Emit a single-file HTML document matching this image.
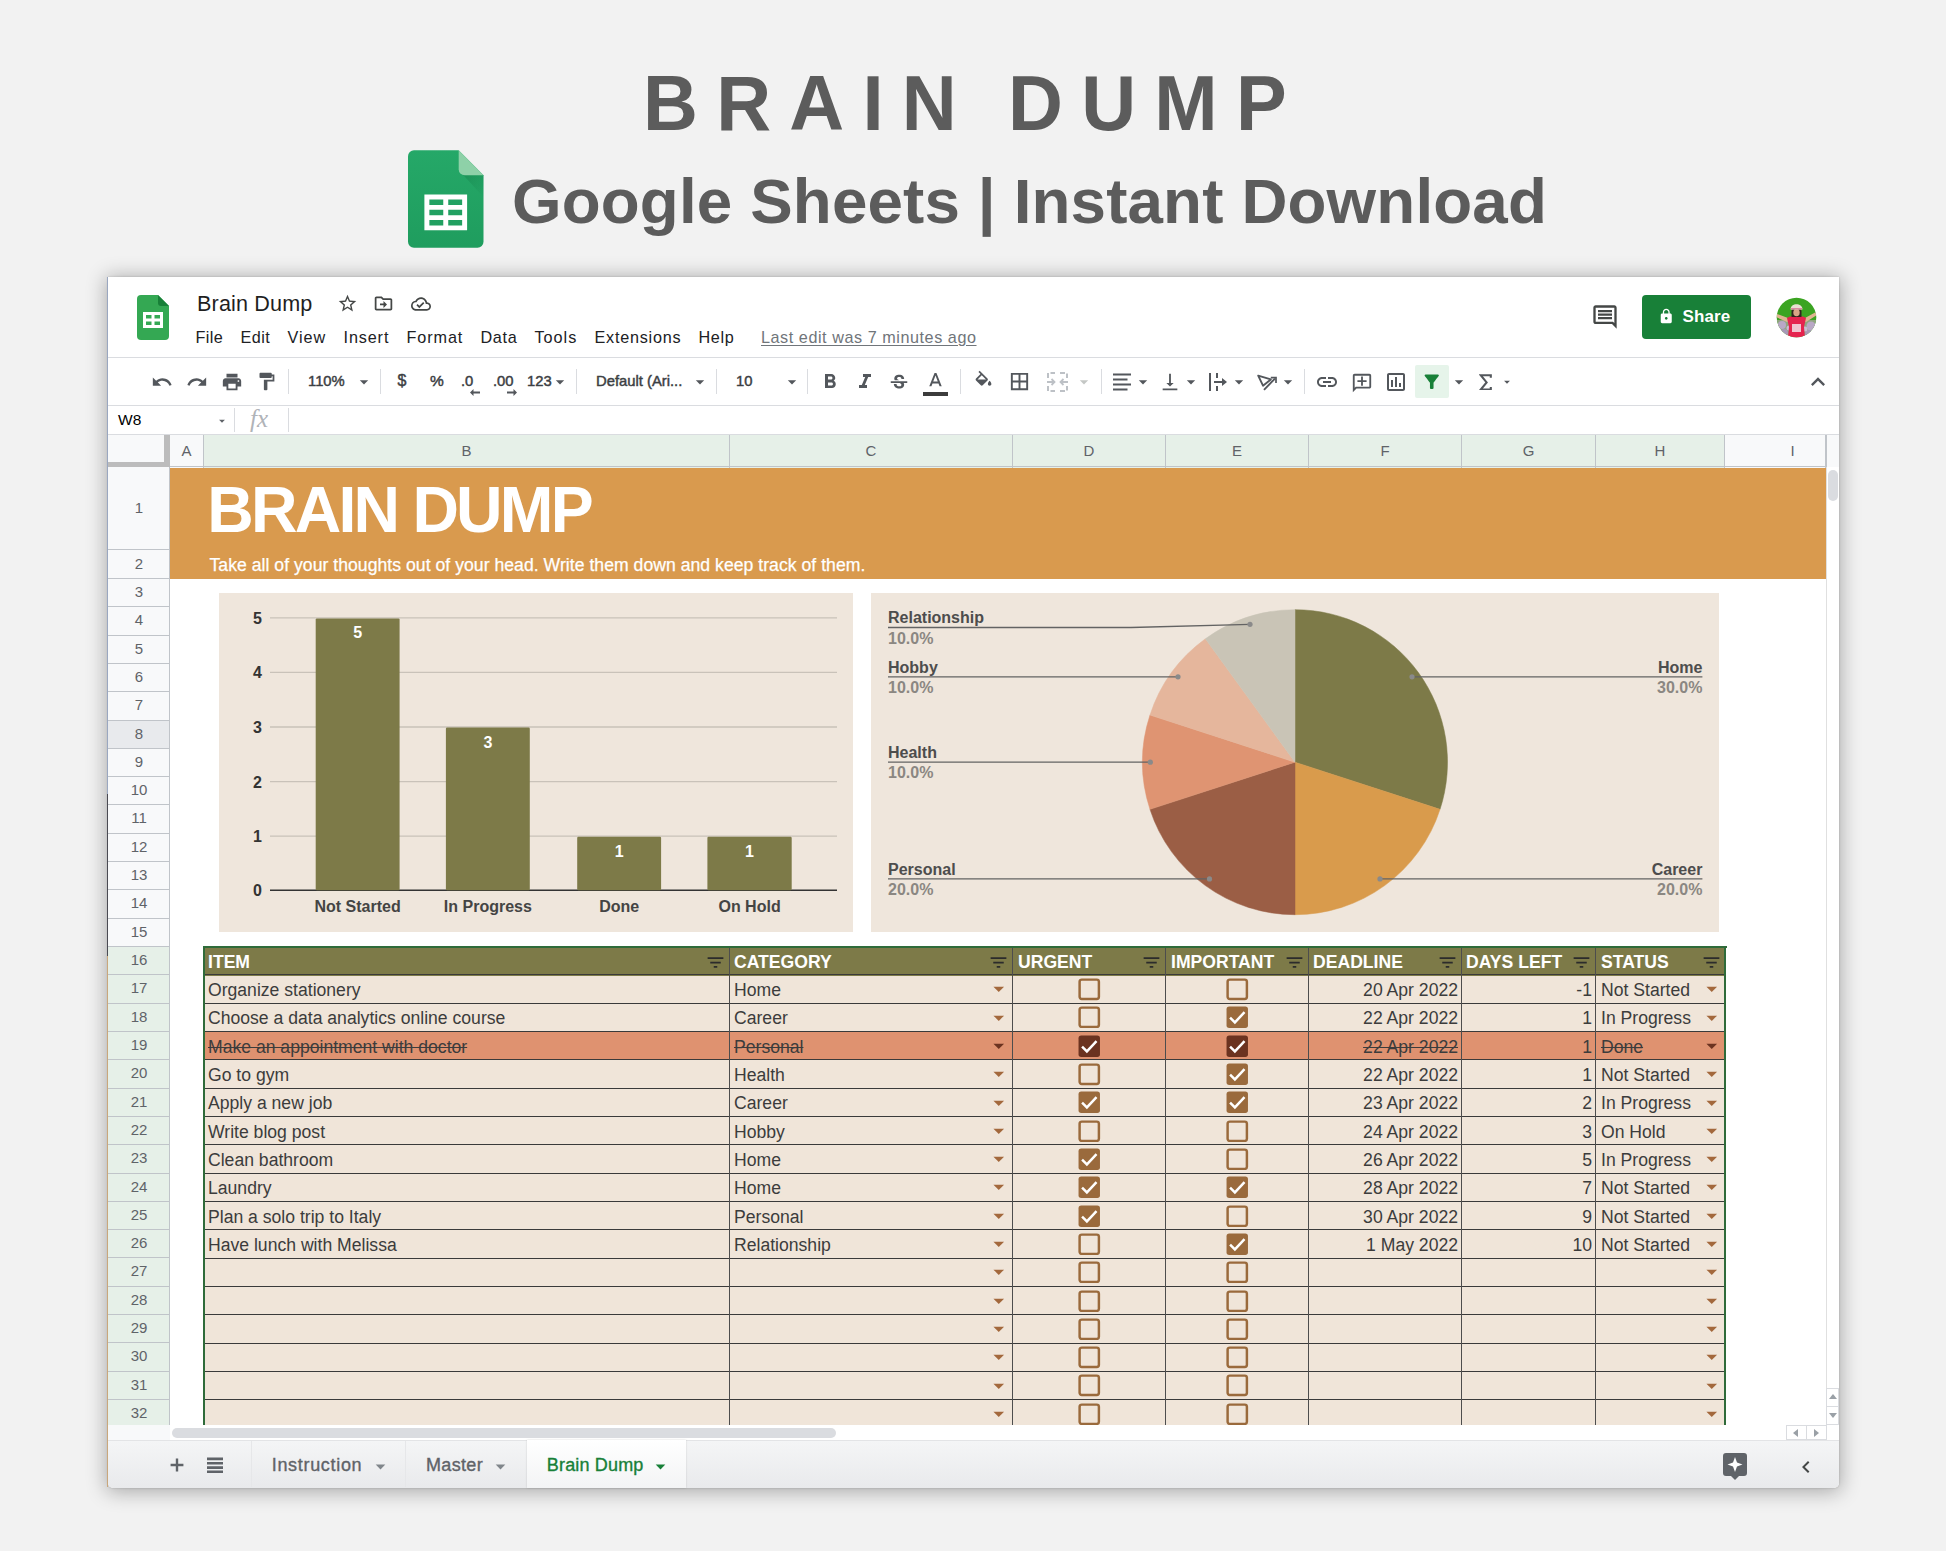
<!DOCTYPE html><html><head><meta charset="utf-8"><title>Brain Dump</title><style>
*{box-sizing:border-box;margin:0;padding:0}
html,body{width:1946px;height:1551px;overflow:hidden}
body{background:#f2f2f2;font-family:"Liberation Sans",sans-serif;position:relative;color:#202124}
.a{position:absolute;white-space:pre}
.win{position:absolute;left:108px;top:277px;width:1731px;height:1211px;background:#fff;box-shadow:0 0 2px rgba(0,0,0,.22),0 2px 20px 2px rgba(0,0,0,.30);overflow:hidden;border-radius:0 0 5px 5px}
.t1{left:647.5px;top:58px;font-weight:bold;font-size:78px;letter-spacing:18.7px;word-spacing:-6.5px;color:#5c5c5c;line-height:90px;transform:scaleX(.975);transform-origin:0 0;margin-left:-5px}
.t2{left:512px;top:164px;font-weight:bold;font-size:63.7px;color:#5c5c5c;line-height:74px;letter-spacing:.16px}
.menu{top:327px;font-size:16.2px;line-height:20px;color:#202124}
.tb{top:372px;font-size:14.8px;line-height:18px;color:#3c4043;-webkit-text-stroke:.45px #3c4043}
.sep{position:absolute;width:1px;background:#dadce0}
.ic{position:absolute;fill:#5f6368}
.rh{position:absolute;left:108px;width:62px;text-align:center;font-size:15px;color:#5f6368;border-bottom:1px solid #c0c4c9;background:#f8f9fa}
.ch{position:absolute;top:435px;height:33px;line-height:31px;text-align:center;font-size:15px;color:#5f6368;border-right:1px solid #c0c4c9;background:#e6f0e8}
.cell{position:absolute;font-size:17.6px;line-height:28px;color:#3c3c3c;white-space:pre}
.hd{position:absolute;font-size:17.6px;line-height:28px;color:#fff;font-weight:bold;white-space:pre}
.st{text-decoration:line-through}
.cl{position:absolute;font-weight:bold;font-size:16px;line-height:20px;white-space:pre}
</style></head><body>
<div class="a t1">BRAIN DUMP</div>
<div class="a t2">Google Sheets | Instant Download</div>
<svg class="a" style="left:408px;top:150.3px" width="75.5" height="98" viewBox="0 0 76 98">
<defs><linearGradient id="lg" x1="0" y1="0" x2="0" y2="1"><stop offset="0" stop-color="#25a868"/><stop offset="1" stop-color="#1f9d5e"/></linearGradient>
<linearGradient id="fs" x1="0" y1="0" x2="1" y2="1"><stop offset="0" stop-color="#0d6b3a" stop-opacity=".35"/><stop offset="1" stop-color="#0d6b3a" stop-opacity="0"/></linearGradient></defs>
<path d="M6 0h45l25 25v67a6 6 0 0 1-6 6H6a6 6 0 0 1-6-6V6a6 6 0 0 1 6-6z" fill="url(#lg)"/>
<path d="M53 22l23 3v22z" fill="url(#fs)"/>
<path d="M51 0l25 25H57a6 6 0 0 1-6-6z" fill="#8ed1a8"/>
<path d="M16.500 44.500v36h43v-36zm5 5h14v5.500h-14zm19 0h14v5.500h-14zm-19 10.300h14v5.500h-14zm19 0h14v5.500h-14zm-19 10.300h14v5.500h-14zm19 0h14v5.500h-14z" fill="#fff"/>
</svg>
<div class="win"></div>
<div class="a" style="left:107px;top:277px;width:1.200px;height:1210px;background:linear-gradient(#9aa7c0 0,#9aa7c0 42.700%,#4a4a52 42.700%,#4a4a52 56.100%,#c9a77c 56.100%)"></div>
<svg class="a" style="left:137px;top:295px" width="32" height="45" viewBox="0 0 32 45">
<path d="M4 0h17l11 11v30a4 4 0 0 1-4 4H4a4 4 0 0 1-4-4V4a4 4 0 0 1 4-4z" fill="#34a853"/>
<path d="M21 0l11 11H24a3 3 0 0 1-3-3z" fill="#188038"/>
<path d="M6 17v16h20V17zm3 3h5.5v3.5H9zm8.5 0H23v3.5h-5.500zM9 26.500h5.500V30H9zm8.500 0H23V30h-5.500z" fill="#fff"/>
</svg>
<div class="a" style="left:197px;top:291px;font-size:21.6px;line-height:26px;color:#1f1f1f;letter-spacing:0.15px">Brain Dump</div>
<svg class="a" style="left:336.5px;top:293.0px" width="21" height="21" viewBox="0 0 24 24" fill="#444746"><path d="M22 9.24l-7.19-.62L12 2 9.19 8.63 2 9.24l5.46 4.73L5.82 21 12 17.27 18.18 21l-1.630-7.030L22 9.240zM12 15.400l-3.760 2.270 1-4.280-3.320-2.880 4.380-.380L12 6.100l1.710 4.040 4.380.380-3.320 2.880 1 4.280L12 15.400z"/></svg>
<svg class="a" style="left:372.5px;top:293.0px" width="21" height="21" viewBox="0 0 24 24" fill="#444746"><path d="M20 6h-8l-2-2H4c-1.100 0-2 .900-2 2v12c0 1.100.900 2 2 2h16c1.100 0 2-.900 2-2V8c0-1.100-.900-2-2-2zm0 12H4V6h5.170l2 2H20v10zm-8-1l4-4-4-4v3H8v2h4v3z"/></svg>
<svg class="a" style="left:411.0px;top:294.0px" width="20" height="20" viewBox="0 0 24 24" fill="#444746"><path d="M19.35 10.04C18.67 6.59 15.64 4 12 4 9.11 4 6.6 5.64 5.35 8.04 2.34 8.36 0 10.91 0 14c0 3.31 2.69 6 6 6h13c2.760 0 5-2.240 5-5 0-2.640-2.050-4.780-4.650-4.960zM19 18H6c-2.210 0-4-1.790-4-4 0-2.050 1.530-3.760 3.560-3.970l1.070-.11.5-.95C8.080 7.140 9.940 6 12 6c2.620 0 4.880 1.860 5.390 4.430l.3 1.500 1.530.11c1.560.1 2.780 1.410 2.780 2.960 0 1.650-1.350 3-3 3zm-9-3.820l-2.090-2.090L6.500 13.500 10 17l6.010-6.010-1.410-1.410z"/></svg>
<div class="a menu" style="left:195.5px;letter-spacing:0.43px">File</div>
<div class="a menu" style="left:240.5px;letter-spacing:0.47px">Edit</div>
<div class="a menu" style="left:287.5px;letter-spacing:1.00px">View</div>
<div class="a menu" style="left:343.5px;letter-spacing:0.88px">Insert</div>
<div class="a menu" style="left:406.5px;letter-spacing:0.92px">Format</div>
<div class="a menu" style="left:480.5px;letter-spacing:0.65px">Data</div>
<div class="a menu" style="left:534.5px;letter-spacing:1.00px">Tools</div>
<div class="a menu" style="left:594.5px;letter-spacing:0.76px">Extensions</div>
<div class="a menu" style="left:698.5px;letter-spacing:0.63px">Help</div>
<div class="a menu" style="left:761px;color:#70757a;text-decoration:underline;text-underline-offset:2px;letter-spacing:0.55px">Last edit was 7 minutes ago</div>
<svg class="a" style="left:1590.5px;top:303.0px" width="28" height="28" viewBox="0 0 24 24" fill="#444746"><path d="M21.99 4c0-1.100-.89-2-1.990-2H4c-1.100 0-2 .900-2 2v12c0 1.100.900 2 2 2h14l4 4-.01-18zM20 4v13.170L18.830 16H4V4h16zM6 12h12v2H6zm0-3h12v2H6zm0-3h12v2H6z"/></svg>
<div class="a" style="left:1642px;top:295px;width:109px;height:44px;background:#188038;border-radius:4px"></div>
<svg class="a" style="left:1657.8px;top:307.8px" width="16.5" height="16.5" viewBox="0 0 24 24" fill="#fff"><path d="M18 8h-1V6c0-2.760-2.240-5-5-5S7 3.240 7 6v2H6c-1.100 0-2 .900-2 2v10c0 1.100.900 2 2 2h12c1.100 0 2-.900 2-2V10c0-1.100-.900-2-2-2zm-6 9c-1.100 0-2-.900-2-2s.900-2 2-2 2 .900 2 2-.900 2-2 2zm3.100-9H8.900V6c0-1.710 1.390-3.100 3.100-3.100 1.710 0 3.100 1.390 3.100 3.100v2z"/></svg>
<div class="a" style="left:1682.500px;top:306.300px;font-size:17px;line-height:22px;color:#fff;font-weight:bold;letter-spacing:.1px">Share</div>
<svg class="a" style="left:1775.500px;top:296.500px" width="41" height="41" viewBox="0 0 41 41"><defs><clipPath id="av"><circle cx="20.500" cy="20.500" r="19.800"/></clipPath></defs>
<g clip-path="url(#av)"><rect width="41" height="41" fill="#3ba422"/><rect y="23" width="41" height="18" fill="#8fa57f"/>
<circle cx="6" cy="28" r="4" fill="#b9a8c6"/><circle cx="35" cy="29" r="4.500" fill="#b9a8c6"/><circle cx="8" cy="36" r="4" fill="#a898b8"/><circle cx="33" cy="37" r="4" fill="#a898b8"/><circle cx="13" cy="31" r="2.500" fill="#c9bcd2"/><circle cx="29" cy="32" r="2.500" fill="#c9bcd2"/>
<path d="M1 17l11 4 2 3-3 1-11-5zM40 15l-11 6-2 3 3 1 11-7z" fill="#dfb391"/>
<path d="M11 21c3-2 6-2 9.500-2s6.500 0 9.500 2l-2 9 1 11H12l1-11z" fill="#e5234e"/>
<path d="M16 27h9v8h-9z" fill="#f0c4d0"/>
<path d="M15.500 14c0-4 10-4 10 0v6h-10z" fill="#33241e"/><ellipse cx="20.500" cy="15.500" rx="3.200" ry="3.800" fill="#d8a585"/>
<path d="M14.500 12.500c0-7 12-7 12 0z" fill="#e9dfd2"/><path d="M15 11h11v1.500H15z" fill="#d98aa0"/></g></svg>
<div class="a" style="left:108px;top:357px;width:1731px;height:1px;background:#dadce0"></div>
<div class="a" style="left:108px;top:405px;width:1731px;height:1px;background:#dadce0"></div>
<div class="a" style="left:108px;top:434px;width:1731px;height:1px;background:#dadce0"></div>
<svg class="a" style="left:151.0px;top:370.5px" width="22" height="22" viewBox="0 0 24 24" fill="#53575c"><path d="M12.5 8c-2.65 0-5.05.99-6.9 2.6L2 7v9h9l-3.62-3.62c1.39-1.16 3.16-1.88 5.12-1.88 3.54 0 6.55 2.31 7.6 5.5l2.37-.78C21.08 11.03 17.15 8 12.5 8z"/></svg>
<svg class="a" style="left:186.0px;top:370.5px" width="22" height="22" viewBox="0 0 24 24" fill="#53575c"><path d="M18.4 10.6C16.55 8.99 14.15 8 11.5 8c-4.65 0-8.58 3.03-9.96 7.22L3.9 16c1.05-3.19 4.05-5.5 7.6-5.5 1.95 0 3.73.72 5.12 1.88L13 16h9V7l-3.6 3.6z"/></svg>
<svg class="a" style="left:220.5px;top:370.5px" width="22" height="22" viewBox="0 0 24 24" fill="#53575c"><path d="M19 8H5c-1.66 0-3 1.34-3 3v6h4v4h12v-4h4v-6c0-1.66-1.34-3-3-3zm-3 11H8v-5h8v5zm3-7c-.55 0-1-.45-1-1s.45-1 1-1 1 .45 1 1-.45 1-1 1zm-1-9H6v4h12V3z"/></svg>
<svg class="a" style="left:256.0px;top:371.0px" width="21" height="21" viewBox="0 0 24 24" fill="#53575c"><path d="M18 4V3c0-.55-.45-1-1-1H5c-.55 0-1 .45-1 1v4c0 .55.45 1 1 1h12c.55 0 1-.45 1-1V6h1v4H9v11c0 .55.45 1 1 1h2c.55 0 1-.45 1-1v-9h8V4h-3z"/></svg>
<div class="sep" style="left:288px;top:369px;height:25px"></div>
<div class="sep" style="left:380px;top:369px;height:25px"></div>
<div class="sep" style="left:576px;top:369px;height:25px"></div>
<div class="sep" style="left:716px;top:369px;height:25px"></div>
<div class="sep" style="left:807px;top:369px;height:25px"></div>
<div class="sep" style="left:960px;top:369px;height:25px"></div>
<div class="sep" style="left:1101px;top:369px;height:25px"></div>
<div class="sep" style="left:1304px;top:369px;height:25px"></div>
<div class="a tb" style="left:308px">110%</div>
<svg class="a" style="left:354.0px;top:372.0px" width="20" height="20" viewBox="0 0 24 24" fill="#53575c"><path d="M7 10l5 5 5-5z"/></svg>
<div class="a tb" style="left:397.5px;font-size:16px">$</div>
<div class="a tb" style="left:430px;font-size:15.5px">%</div>
<div class="a tb" style="left:461px">.0</div>
<div class="a tb" style="left:493px">.00</div>
<svg class="a" style="left:470px;top:388.500px" width="10" height="7" viewBox="0 0 10 7" fill="#53575c"><path d="M3.500 0v2.600H10v1.800H3.500V7L0 3.500z"/></svg>
<svg class="a" style="left:507px;top:388.500px" width="10" height="7" viewBox="0 0 10 7" fill="#53575c"><path d="M6.500 0v2.600H0v1.800h6.500V7L10 3.500z"/></svg>
<div class="a tb" style="left:527px">123</div>
<svg class="a" style="left:550.0px;top:372.0px" width="20" height="20" viewBox="0 0 24 24" fill="#53575c"><path d="M7 10l5 5 5-5z"/></svg>
<div class="a tb" style="left:596px">Default (Ari...</div>
<svg class="a" style="left:690.0px;top:372.0px" width="20" height="20" viewBox="0 0 24 24" fill="#53575c"><path d="M7 10l5 5 5-5z"/></svg>
<div class="a tb" style="left:736px">10</div>
<svg class="a" style="left:782.0px;top:372.0px" width="20" height="20" viewBox="0 0 24 24" fill="#53575c"><path d="M7 10l5 5 5-5z"/></svg>
<svg class="a" style="left:817.5px;top:369.5px" width="24" height="24" viewBox="0 0 24 24" fill="#53575c"><path d="M15.6 10.79c.97-.67 1.65-1.77 1.65-2.79 0-2.26-1.75-4-4-4H7v14h7.04c2.09 0 3.71-1.7 3.71-3.79 0-1.52-.86-2.82-2.15-3.42zM10 6.5h3c.83 0 1.5.67 1.5 1.5s-.67 1.5-1.5 1.5h-3v-3zm3.5 9H10v-3h3.5c.83 0 1.5.67 1.5 1.5s-.67 1.5-1.500 1.500z"/></svg>
<svg class="a" style="left:852.5px;top:369.5px" width="24" height="24" viewBox="0 0 24 24" fill="#53575c"><path d="M10 4v3h2.21l-3.42 8H6v3h8v-3h-2.21l3.42-8H18V4z"/></svg>
<svg class="a" style="left:888.0px;top:371.5px" width="22" height="22" viewBox="0 0 24 24" fill="#53575c"><path d="M7.24 8.75c-.26-.48-.39-1.03-.39-1.67 0-.61.13-1.16.4-1.67.26-.5.63-.93 1.11-1.29.48-.35 1.05-.63 1.7-.83.66-.19 1.39-.29 2.18-.29.81 0 1.54.11 2.21.34.66.22 1.23.54 1.69.94.47.4.83.88 1.08 1.43.25.55.38 1.15.38 1.81h-3.01c0-.31-.05-.59-.15-.85-.09-.27-.24-.49-.44-.68-.2-.19-.45-.33-.75-.44-.3-.1-.66-.16-1.06-.16-.39 0-.74.04-1.03.13-.29.09-.53.21-.72.36-.19.16-.34.34-.44.55-.1.21-.15.43-.15.66 0 .48.25.88.74 1.21.38.25.77.48 1.41.7H7.39c-.05-.08-.11-.17-.15-.25zM21 12v-2H3v2h9.620c.18.07.4.14.55.2.37.17.66.34.87.51.21.17.35.36.43.57.07.2.11.43.11.69 0 .23-.05.45-.14.66-.09.2-.23.38-.42.53-.19.15-.42.26-.71.35-.29.08-.63.13-1.01.13-.43 0-.83-.04-1.18-.13s-.66-.23-.91-.42c-.25-.19-.45-.44-.59-.75-.14-.31-.25-.76-.25-1.21H6.4c0 .55.08 1.13.24 1.58.16.45.37.85.65 1.21.28.35.6.66.98.92.37.26.78.48 1.22.65.44.17.9.3 1.38.39.48.08.96.13 1.44.13.8 0 1.53-.09 2.18-.28s1.21-.45 1.67-.79c.46-.34.82-.77 1.07-1.27s.38-1.07.38-1.71c0-.6-.1-1.14-.31-1.61-.05-.11-.11-.23-.17-.33H21z"/></svg>
<svg class="a" style="left:923.5px;top:369.5px" width="23" height="23" viewBox="0 0 24 24" fill="#53575c"><path d="M11 3L5.5 17h2.250l1.120-3h6.250l1.120 3h2.250L13 3h-2zm-1.380 9L12 5.670 14.380 12H9.620z"/></svg>
<div class="a" style="left:922.500px;top:391.500px;width:25.500px;height:4.500px;background:#3c3c3c"></div>
<svg class="a" style="left:972.5px;top:369.0px" width="21" height="21" viewBox="0 0 24 20" fill="#53575c"><path d="M16.56 8.94L7.62 0 6.21 1.41l2.38 2.38-5.15 5.15c-.59.59-.59 1.54 0 2.12l5.5 5.5c.29.29.68.44 1.06.44s.77-.15 1.06-.44l5.5-5.5c.59-.58.59-1.53 0-2.12zM5.21 10L10 5.210 14.790 10H5.210zM19 11.5s-2 2.170-2 3.500c0 1.100.900 2 2 2s2-.900 2-2c0-1.330-2-3.500-2-3.500z"/></svg>
<svg class="a" style="left:1008.0px;top:370.0px" width="23" height="23" viewBox="0 0 24 24" fill="#53575c"><path d="M3 3v18h18V3H3zm8 16H5v-6h6v6zm0-8H5V5h6v6zm8 8h-6v-6h6v6zm0-8h-6V5h6v6z"/></svg>
<svg class="a" style="left:1046px;top:371px" width="23" height="22" viewBox="0 0 23 22" fill="none" stroke="#bdc1c6" stroke-width="2"><path d="M2 7V2h7M14 2h7v5M2 15v5h7M14 20h7v-5" stroke-dasharray="5 2.500"/><path d="M1 11h7M22 11h-7" /><path d="M5.500 8l3 3-3 3M17.500 8l-3 3 3 3" stroke-width="1.800"/></svg>
<svg class="a" style="left:1074.0px;top:372.0px" width="20" height="20" viewBox="0 0 24 24" fill="#c4c7c5"><path d="M7 10l5 5 5-5z"/></svg>
<svg class="a" style="left:1113px;top:373px" width="18" height="18" viewBox="0 0 18 18" fill="#53575c"><path d="M0 0.500h18v2H0zM0 5.500h14.500v2H0zM0 10.500h18v2H0zM0 15.500h14.500v2H0z"/></svg>
<svg class="a" style="left:1133.0px;top:372.0px" width="20" height="20" viewBox="0 0 24 24" fill="#53575c"><path d="M7 10l5 5 5-5z"/></svg>
<svg class="a" style="left:1159.0px;top:370.5px" width="22" height="22" viewBox="0 0 24 24" fill="#53575c"><path d="M16 13h-3V3h-2v10H8l4 4 4-4zM4 19v2h16v-2H4z"/></svg>
<svg class="a" style="left:1181.0px;top:372.0px" width="20" height="20" viewBox="0 0 24 24" fill="#53575c"><path d="M7 10l5 5 5-5z"/></svg>
<svg class="a" style="left:1207px;top:371px" width="22" height="22" viewBox="0 0 22 22" fill="#53575c"><path d="M2 2h2v18H2zM9 2h2v5H9zM9 15h2v5H9zM7 10h8V7l5 4-5 4v-3H7z"/></svg>
<svg class="a" style="left:1229.0px;top:372.0px" width="20" height="20" viewBox="0 0 24 24" fill="#53575c"><path d="M7 10l5 5 5-5z"/></svg>
<svg class="a" style="left:1256px;top:370px" width="24" height="24" viewBox="0 0 24 24" fill="none" stroke="#53575c" stroke-width="1.900"><path d="M2.200 5.600l12.600 3.800-7.800 6.300z" stroke-linejoin="round"/><path d="M8 19.800L19 8.600"/><path d="M14.800 7.700h5.200v5.200" stroke-width="1.700"/></svg>
<svg class="a" style="left:1278.0px;top:372.0px" width="20" height="20" viewBox="0 0 24 24" fill="#53575c"><path d="M7 10l5 5 5-5z"/></svg>
<svg class="a" style="left:1314.5px;top:369.5px" width="24" height="24" viewBox="0 0 24 24" fill="#53575c"><path d="M3.9 12c0-1.71 1.39-3.1 3.1-3.1h4V7H7c-2.76 0-5 2.24-5 5s2.24 5 5 5h4v-1.900H7c-1.710 0-3.100-1.390-3.100-3.100zM8 13h8v-2H8v2zm9-6h-4v1.900h4c1.710 0 3.100 1.390 3.100 3.100s-1.390 3.100-3.100 3.100h-4V17h4c2.760 0 5-2.240 5-5s-2.240-5-5-5z"/></svg>
<svg class="a" style="left:1350.5px;top:371.5px" width="22" height="22" viewBox="0 0 24 24" fill="#53575c"><path d="M2 4c0-1.1.9-2 2-2h16c1.1 0 2 .9 2 2v12c0 1.1-.9 2-2 2H6l-4 4V4zm2 13.170L5.170 16H20V4H4v13.170zM11 5h2v4h4v2h-4v4h-2v-4H7V9h4z"/></svg>
<svg class="a" style="left:1384.0px;top:369.5px" width="24" height="24" viewBox="0 0 24 24" fill="#53575c"><path d="M9 17H7v-7h2v7zm4 0h-2V7h2v10zm4 0h-2v-4h2v4zm2 2H5V5h14v14zm0-16H5c-1.100 0-2 .900-2 2v14c0 1.100.900 2 2 2h14c1.100 0 2-.900 2-2V5c0-1.100-.900-2-2-2z"/></svg>
<div class="a" style="left:1415px;top:365px;width:34px;height:33px;background:#e6f4ea;border-radius:2px"></div>
<svg class="a" style="left:1420.8px;top:371.2px" width="21.5" height="21.5" viewBox="0 0 24 24" fill="#188038"><path d="M4.25 5.61C6.27 8.2 10 13 10 13v6c0 .55.45 1 1 1h2c.55 0 1-.45 1-1v-6s3.720-4.800 5.740-7.390c.51-.66.04-1.610-.79-1.610H5.040c-.830 0-1.300.950-.790 1.610z"/></svg>
<svg class="a" style="left:1449.0px;top:372.0px" width="20" height="20" viewBox="0 0 24 24" fill="#53575c"><path d="M7 10l5 5 5-5z"/></svg>
<svg class="a" style="left:1479.300px;top:373.500px" width="12.700" height="16.800" viewBox="0 0 15 20" fill="none" stroke="#53575c" stroke-width="2.500"><path d="M14 4.500V1.500H2l7 8.500-7 8.500h12v-3" stroke-linejoin="miter"/></svg>
<svg class="a" style="left:1500.0px;top:375.0px" width="14" height="14" viewBox="0 0 24 24" fill="#53575c"><path d="M7 10l5 5 5-5z"/></svg>
<svg class="a" style="left:1804.0px;top:367.5px" width="28" height="28" viewBox="0 0 24 24" fill="#53575c"><path d="M12 8l-6 6 1.410 1.410L12 10.830l4.590 4.580L18 14z"/></svg>
<div class="a" style="left:118px;top:411px;font-size:15.5px;line-height:18px;color:#000">W8</div>
<svg class="a" style="left:215.0px;top:414.0px" width="14" height="14" viewBox="0 0 24 24" fill="#5f6368"><path d="M7 10l5 5 5-5z"/></svg>
<div class="sep" style="left:234px;top:408px;height:24px"></div>
<div class="a" style="left:250px;top:405px;font-family:'Liberation Serif',serif;font-style:italic;font-size:25px;line-height:28px;color:#b0b3b8">fx</div>
<div class="sep" style="left:288px;top:408px;height:24px"></div>
<div class="a" style="left:108px;top:435px;width:62px;height:32px;background:#f8f9fa;border-right:6px solid #bcbcbc;border-bottom:5px solid #bcbcbc"></div>
<div class="ch" style="left:170px;width:34px;background:#f8f9fa;">A</div>
<div class="ch" style="left:204px;width:526px;background:#e6f0e8;">B</div>
<div class="ch" style="left:730px;width:283px;background:#e6f0e8;">C</div>
<div class="ch" style="left:1013px;width:153px;background:#e6f0e8;">D</div>
<div class="ch" style="left:1166px;width:143px;background:#e6f0e8;">E</div>
<div class="ch" style="left:1309px;width:153px;background:#e6f0e8;">F</div>
<div class="ch" style="left:1462px;width:134px;background:#e6f0e8;">G</div>
<div class="ch" style="left:1596px;width:129px;background:#e6f0e8;">H</div>
<div class="ch" style="left:1725px;width:101px;background:#f8f9fa;padding-left:35px;">I</div>
<div class="a" style="left:170px;top:466.300px;width:1656px;height:1.200px;background:#c0c4c9"></div>
<div class="a" style="left:1826px;top:435px;width:13px;height:33px;background:#f8f9fa;border-left:1px solid #c0c4c9"></div>
<div class="a" style="left:1826px;top:467px;width:13px;height:958px;background:#fff;border-left:1px solid #e0e0e0"></div>
<div class="a" style="left:1828px;top:470px;width:10px;height:31px;background:#dadce0;border-radius:5px"></div>
<div class="rh" style="top:467px;height:83px;line-height:82px;background:#f8f9fa">1</div>
<div class="rh" style="top:550px;height:29px;line-height:28px;background:#f8f9fa">2</div>
<div class="rh" style="top:579px;height:28px;line-height:25px;background:#f8f9fa">3</div>
<div class="rh" style="top:607px;height:29px;line-height:26px;background:#f8f9fa">4</div>
<div class="rh" style="top:636px;height:28px;line-height:25px;background:#f8f9fa">5</div>
<div class="rh" style="top:664px;height:28px;line-height:25px;background:#f8f9fa">6</div>
<div class="rh" style="top:692px;height:29px;line-height:26px;background:#f8f9fa">7</div>
<div class="rh" style="top:721px;height:28px;line-height:25px;background:#e8eaed">8</div>
<div class="rh" style="top:749px;height:28px;line-height:25px;background:#f8f9fa">9</div>
<div class="rh" style="top:777px;height:28px;line-height:25px;background:#f8f9fa">10</div>
<div class="rh" style="top:805px;height:29px;line-height:26px;background:#f8f9fa">11</div>
<div class="rh" style="top:834px;height:28px;line-height:25px;background:#f8f9fa">12</div>
<div class="rh" style="top:862px;height:28px;line-height:25px;background:#f8f9fa">13</div>
<div class="rh" style="top:890px;height:29px;line-height:26px;background:#f8f9fa">14</div>
<div class="rh" style="top:919px;height:28px;line-height:25px;background:#f8f9fa">15</div>
<div class="rh" style="top:947px;height:28px;line-height:25px;background:#e6f0e8">16</div>
<div class="rh" style="top:975px;height:29px;line-height:26px;background:#e6f0e8">17</div>
<div class="rh" style="top:1004px;height:28px;line-height:25px;background:#e6f0e8">18</div>
<div class="rh" style="top:1032px;height:28px;line-height:25px;background:#e6f0e8">19</div>
<div class="rh" style="top:1060px;height:29px;line-height:26px;background:#e6f0e8">20</div>
<div class="rh" style="top:1089px;height:28px;line-height:25px;background:#e6f0e8">21</div>
<div class="rh" style="top:1117px;height:28px;line-height:25px;background:#e6f0e8">22</div>
<div class="rh" style="top:1145px;height:29px;line-height:26px;background:#e6f0e8">23</div>
<div class="rh" style="top:1174px;height:28px;line-height:25px;background:#e6f0e8">24</div>
<div class="rh" style="top:1202px;height:28px;line-height:25px;background:#e6f0e8">25</div>
<div class="rh" style="top:1230px;height:28px;line-height:25px;background:#e6f0e8">26</div>
<div class="rh" style="top:1258px;height:29px;line-height:26px;background:#e6f0e8">27</div>
<div class="rh" style="top:1287px;height:28px;line-height:25px;background:#e6f0e8">28</div>
<div class="rh" style="top:1315px;height:28px;line-height:25px;background:#e6f0e8">29</div>
<div class="rh" style="top:1343px;height:29px;line-height:26px;background:#e6f0e8">30</div>
<div class="rh" style="top:1372px;height:28px;line-height:25px;background:#e6f0e8">31</div>
<div class="rh" style="top:1400px;height:28px;line-height:25px;background:#e6f0e8">32</div>
<div class="a" style="left:169px;top:467px;width:1px;height:958px;background:#c0c4c9"></div>
<div class="a" style="left:170px;top:467.500px;width:1656px;height:111px;background:#d99a4e"></div>
<div class="a" style="left:207.300px;top:475px;font-size:64.4px;line-height:70px;font-weight:bold;color:#fff;letter-spacing:-2.780px">BRAIN DUMP</div>
<div class="a" style="left:209.500px;top:554px;font-size:17.6px;line-height:22px;color:#fff;letter-spacing:.035px;-webkit-text-stroke:.25px #fff">Take all of your thoughts out of your head. Write them down and keep track of them.</div>
<div class="a" style="left:218.500px;top:593px;width:634.500px;height:338.6px;background:#efe6dc"></div>
<svg class="a" style="left:218px;top:593px" width="636" height="339" viewBox="218 593 636 339"><line x1="270" x2="837" y1="617.9" y2="617.9" stroke="#c9c2b9" stroke-width="1.3"/><line x1="270" x2="837" y1="672.4" y2="672.4" stroke="#c9c2b9" stroke-width="1.3"/><line x1="270" x2="837" y1="727" y2="727" stroke="#c9c2b9" stroke-width="1.3"/><line x1="270" x2="837" y1="781.6" y2="781.6" stroke="#c9c2b9" stroke-width="1.3"/><line x1="270" x2="837" y1="836.2" y2="836.2" stroke="#c9c2b9" stroke-width="1.3"/><line x1="270" x2="837" y1="890.3" y2="890.3" stroke="#333" stroke-width="1.6"/><rect x="315.7" y="618.4" width="83.90000000000003" height="271.9" rx="1.200" fill="#7d7a48"/><rect x="445.9" y="727.5" width="83.89999999999998" height="162.79999999999995" rx="1.200" fill="#7d7a48"/><rect x="577.2" y="836.7" width="83.89999999999998" height="53.59999999999991" rx="1.200" fill="#7d7a48"/><rect x="707.4" y="836.7" width="84.30000000000007" height="53.59999999999991" rx="1.200" fill="#7d7a48"/></svg>
<div class="cl" style="left:236px;width:26px;text-align:right;top:608.9px;color:#333">5</div>
<div class="cl" style="left:236px;width:26px;text-align:right;top:663.4px;color:#333">4</div>
<div class="cl" style="left:236px;width:26px;text-align:right;top:718px;color:#333">3</div>
<div class="cl" style="left:236px;width:26px;text-align:right;top:772.6px;color:#333">2</div>
<div class="cl" style="left:236px;width:26px;text-align:right;top:827.2px;color:#333">1</div>
<div class="cl" style="left:236px;width:26px;text-align:right;top:881.3px;color:#333">0</div>
<div class="cl" style="left:297.65px;width:120px;text-align:center;top:623.4px;color:#fff">5</div>
<div class="cl" style="left:297.65px;width:120px;text-align:center;top:897.2px;color:#444">Not Started</div>
<div class="cl" style="left:427.84999999999997px;width:120px;text-align:center;top:732.5px;color:#fff">3</div>
<div class="cl" style="left:427.84999999999997px;width:120px;text-align:center;top:897.2px;color:#444">In Progress</div>
<div class="cl" style="left:559.1500000000001px;width:120px;text-align:center;top:841.7px;color:#fff">1</div>
<div class="cl" style="left:559.1500000000001px;width:120px;text-align:center;top:897.2px;color:#444">Done</div>
<div class="cl" style="left:689.55px;width:120px;text-align:center;top:841.7px;color:#fff">1</div>
<div class="cl" style="left:689.55px;width:120px;text-align:center;top:897.2px;color:#444">On Hold</div>
<div class="a" style="left:870.500px;top:593px;width:848px;height:338.500px;background:#efe6dc"></div>
<svg class="a" style="left:870px;top:593px" width="849" height="339" viewBox="870 593 849 339"><path d="M1295 762.2L1295.00 609.70A152.5 152.5 0 0 1 1440.04 809.33Z" fill="#7d7a48" stroke="#7d7a48" stroke-width="0.5"/><path d="M1295 762.2L1440.04 809.33A152.5 152.5 0 0 1 1295.00 914.70Z" fill="#d99b4c" stroke="#d99b4c" stroke-width="0.5"/><path d="M1295 762.2L1295.00 914.70A152.5 152.5 0 0 1 1149.96 809.33Z" fill="#9b5e45" stroke="#9b5e45" stroke-width="0.5"/><path d="M1295 762.2L1149.96 809.33A152.5 152.5 0 0 1 1149.96 715.07Z" fill="#df9472" stroke="#df9472" stroke-width="0.5"/><path d="M1295 762.2L1149.96 715.07A152.5 152.5 0 0 1 1205.36 638.82Z" fill="#e5b69c" stroke="#e5b69c" stroke-width="0.5"/><path d="M1295 762.2L1205.36 638.82A152.5 152.5 0 0 1 1295.00 609.70Z" fill="#c9c4b6" stroke="#c9c4b6" stroke-width="0.5"/><path d="M888 627.5L1131 627.5L1250 624.3" fill="none" stroke="#636363" stroke-width="1.300"/><circle cx="1250" cy="624.3" r="2.600" fill="#8a8a8a"/><line x1="888" y1="676.8" x2="1178" y2="676.8" stroke="#636363" stroke-width="1.300"/><circle cx="1178" cy="676.8" r="2.600" fill="#8a8a8a"/><line x1="888" y1="762.2" x2="1150.3" y2="762.2" stroke="#636363" stroke-width="1.300"/><circle cx="1150.3" cy="762.2" r="2.600" fill="#8a8a8a"/><line x1="888" y1="878.9" x2="1209.5" y2="878.9" stroke="#636363" stroke-width="1.300"/><circle cx="1209.5" cy="878.9" r="2.600" fill="#8a8a8a"/><line x1="1702.4" y1="676.8" x2="1412" y2="676.8" stroke="#636363" stroke-width="1.300"/><circle cx="1412" cy="676.8" r="2.600" fill="#8a8a8a"/><line x1="1702.4" y1="878.9" x2="1380" y2="878.9" stroke="#636363" stroke-width="1.300"/><circle cx="1380" cy="878.9" r="2.600" fill="#8a8a8a"/></svg>
<div class="cl" style="left:888px;top:608.4px;color:#4d4d4d">Relationship</div>
<div class="cl" style="left:888px;top:628.5px;color:#8b8782">10.0%</div>
<div class="cl" style="left:888px;top:657.6999999999999px;color:#4d4d4d">Hobby</div>
<div class="cl" style="left:888px;top:677.8px;color:#8b8782">10.0%</div>
<div class="cl" style="left:888px;top:743.1px;color:#4d4d4d">Health</div>
<div class="cl" style="left:888px;top:763.2px;color:#8b8782">10.0%</div>
<div class="cl" style="left:888px;top:859.8px;color:#4d4d4d">Personal</div>
<div class="cl" style="left:888px;top:879.9px;color:#8b8782">20.0%</div>
<div class="cl" style="left:1502.4px;width:200px;text-align:right;top:657.6999999999999px;color:#4d4d4d">Home</div>
<div class="cl" style="left:1502.4px;width:200px;text-align:right;top:677.8px;color:#8b8782">30.0%</div>
<div class="cl" style="left:1502.4px;width:200px;text-align:right;top:859.8px;color:#4d4d4d">Career</div>
<div class="cl" style="left:1502.4px;width:200px;text-align:right;top:879.9px;color:#8b8782">20.0%</div>
<div class="a" style="left:203px;top:947.0px;width:1523px;height:478.0px;background:#f0e5d9"></div>
<div class="a" style="left:203px;top:947.0px;width:1523px;height:28.8px;background:#7d7a48"></div>
<div class="a" style="left:203px;top:1032.0px;width:1523px;height:28.3px;background:#df9270"></div>
<div class="a" style="left:203px;top:974.4px;width:1523px;height:1px;background:#3a3a3a"></div>
<div class="a" style="left:203px;top:1002.8px;width:1523px;height:1px;background:#3a3a3a"></div>
<div class="a" style="left:203px;top:1031.1px;width:1523px;height:1px;background:#3a3a3a"></div>
<div class="a" style="left:203px;top:1059.4px;width:1523px;height:1px;background:#3a3a3a"></div>
<div class="a" style="left:203px;top:1087.7px;width:1523px;height:1px;background:#3a3a3a"></div>
<div class="a" style="left:203px;top:1116.0px;width:1523px;height:1px;background:#3a3a3a"></div>
<div class="a" style="left:203px;top:1144.3px;width:1523px;height:1px;background:#3a3a3a"></div>
<div class="a" style="left:203px;top:1172.6px;width:1523px;height:1px;background:#3a3a3a"></div>
<div class="a" style="left:203px;top:1200.9px;width:1523px;height:1px;background:#3a3a3a"></div>
<div class="a" style="left:203px;top:1229.2px;width:1523px;height:1px;background:#3a3a3a"></div>
<div class="a" style="left:203px;top:1257.5px;width:1523px;height:1px;background:#3a3a3a"></div>
<div class="a" style="left:203px;top:1285.8px;width:1523px;height:1px;background:#3a3a3a"></div>
<div class="a" style="left:203px;top:1314.2px;width:1523px;height:1px;background:#3a3a3a"></div>
<div class="a" style="left:203px;top:1342.5px;width:1523px;height:1px;background:#3a3a3a"></div>
<div class="a" style="left:203px;top:1370.8px;width:1523px;height:1px;background:#3a3a3a"></div>
<div class="a" style="left:203px;top:1399.1px;width:1523px;height:1px;background:#3a3a3a"></div>
<div class="a" style="left:729px;top:947.0px;width:1px;height:478.0px;background:#4d4d4d"></div>
<div class="a" style="left:1012px;top:947.0px;width:1px;height:478.0px;background:#4d4d4d"></div>
<div class="a" style="left:1165px;top:947.0px;width:1px;height:478.0px;background:#4d4d4d"></div>
<div class="a" style="left:1308px;top:947.0px;width:1px;height:478.0px;background:#4d4d4d"></div>
<div class="a" style="left:1461px;top:947.0px;width:1px;height:478.0px;background:#4d4d4d"></div>
<div class="a" style="left:1595px;top:947.0px;width:1px;height:478.0px;background:#4d4d4d"></div>
<div class="a" style="left:203px;top:946.2px;width:1523.5px;height:1.600px;background:#2f6b3a"></div>
<div class="a" style="left:203.2px;top:946.2px;width:1.800px;height:479.0px;background:#2f6b3a"></div>
<div class="a" style="left:1724px;top:946.2px;width:2px;height:479.0px;background:#2f6b3a"></div>
<div class="hd" style="left:208px;top:948.0px">ITEM</div>
<svg class="a" style="left:704.5px;top:951.5px" width="21" height="21" viewBox="0 0 24 24" fill="#2b2b2b"><path d="M10 18h4v-2h-4v2zM3 6v2h18V6H3zm3 7h12v-2H6v2z"/></svg>
<div class="hd" style="left:734px;top:948.0px">CATEGORY</div>
<svg class="a" style="left:987.5px;top:951.5px" width="21" height="21" viewBox="0 0 24 24" fill="#2b2b2b"><path d="M10 18h4v-2h-4v2zM3 6v2h18V6H3zm3 7h12v-2H6v2z"/></svg>
<div class="hd" style="left:1018px;top:948.0px">URGENT</div>
<svg class="a" style="left:1140.5px;top:951.5px" width="21" height="21" viewBox="0 0 24 24" fill="#2b2b2b"><path d="M10 18h4v-2h-4v2zM3 6v2h18V6H3zm3 7h12v-2H6v2z"/></svg>
<div class="hd" style="left:1171px;top:948.0px">IMPORTANT</div>
<svg class="a" style="left:1283.5px;top:951.5px" width="21" height="21" viewBox="0 0 24 24" fill="#2b2b2b"><path d="M10 18h4v-2h-4v2zM3 6v2h18V6H3zm3 7h12v-2H6v2z"/></svg>
<div class="hd" style="left:1313px;top:948.0px">DEADLINE</div>
<svg class="a" style="left:1436.5px;top:951.5px" width="21" height="21" viewBox="0 0 24 24" fill="#2b2b2b"><path d="M10 18h4v-2h-4v2zM3 6v2h18V6H3zm3 7h12v-2H6v2z"/></svg>
<div class="hd" style="left:1466px;top:948.0px">DAYS LEFT</div>
<svg class="a" style="left:1570.5px;top:951.5px" width="21" height="21" viewBox="0 0 24 24" fill="#2b2b2b"><path d="M10 18h4v-2h-4v2zM3 6v2h18V6H3zm3 7h12v-2H6v2z"/></svg>
<div class="hd" style="left:1601px;top:948.0px">STATUS</div>
<svg class="a" style="left:1700.5px;top:951.5px" width="21" height="21" viewBox="0 0 24 24" fill="#2b2b2b"><path d="M10 18h4v-2h-4v2zM3 6v2h18V6H3zm3 7h12v-2H6v2z"/></svg>
<div class="cell" style="left:208px;top:976.1px">Organize stationery</div>
<div class="cell" style="left:734px;top:976.1px">Home</div>
<div class="cell" style="left:1309px;width:149px;text-align:right;top:976.1px">20 Apr 2022</div>
<div class="cell" style="left:1462px;width:130px;text-align:right;top:976.1px">-1</div>
<div class="cell" style="left:1601px;top:976.1px">Not Started</div>
<svg class="a" style="left:986.2px;top:976.2px" width="25.5" height="25.5" viewBox="0 0 24 24" fill="#a3683c"><path d="M7 10l5 5 5-5z"/></svg>
<svg class="a" style="left:1698.8px;top:976.2px" width="25.5" height="25.5" viewBox="0 0 24 24" fill="#a3683c"><path d="M7 10l5 5 5-5z"/></svg>
<svg class="a" style="left:1078.2px;top:978.0px" width="22.5" height="22.5" viewBox="0 0 21 21"><rect x="1.500" y="1.500" width="18" height="18" rx="2" fill="none" stroke="#9a6a3c" stroke-width="2.300"/></svg>
<svg class="a" style="left:1226.2px;top:978.0px" width="22.5" height="22.5" viewBox="0 0 21 21"><rect x="1.500" y="1.500" width="18" height="18" rx="2" fill="none" stroke="#9a6a3c" stroke-width="2.300"/></svg>
<div class="cell" style="left:208px;top:1004.4px">Choose a data analytics online course</div>
<div class="cell" style="left:734px;top:1004.4px">Career</div>
<div class="cell" style="left:1309px;width:149px;text-align:right;top:1004.4px">22 Apr 2022</div>
<div class="cell" style="left:1462px;width:130px;text-align:right;top:1004.4px">1</div>
<div class="cell" style="left:1601px;top:1004.4px">In Progress</div>
<svg class="a" style="left:986.2px;top:1004.6px" width="25.5" height="25.5" viewBox="0 0 24 24" fill="#a3683c"><path d="M7 10l5 5 5-5z"/></svg>
<svg class="a" style="left:1698.8px;top:1004.6px" width="25.5" height="25.5" viewBox="0 0 24 24" fill="#a3683c"><path d="M7 10l5 5 5-5z"/></svg>
<svg class="a" style="left:1078.2px;top:1006.4px" width="22.5" height="22.5" viewBox="0 0 21 21"><rect x="1.500" y="1.500" width="18" height="18" rx="2" fill="none" stroke="#9a6a3c" stroke-width="2.300"/></svg>
<svg class="a" style="left:1226.2px;top:1006.4px" width="22.5" height="22.5" viewBox="0 0 21 21"><rect x="0.500" y="0.500" width="20" height="20" rx="2.500" fill="#9a6a3c"/><path d="M3.800 10.800l4.500 4.500 9-9.500" fill="none" stroke="#fff" stroke-width="2.300"/></svg>
<div class="cell st" style="left:208px;top:1032.8px">Make an appointment with doctor</div>
<div class="cell st" style="left:734px;top:1032.8px">Personal</div>
<div class="cell st" style="left:1309px;width:149px;text-align:right;top:1032.8px">22 Apr 2022</div>
<div class="cell" style="left:1462px;width:130px;text-align:right;top:1032.8px">1</div>
<div class="cell st" style="left:1601px;top:1032.8px">Done</div>
<svg class="a" style="left:986.2px;top:1032.9px" width="25.5" height="25.5" viewBox="0 0 24 24" fill="#6b3320"><path d="M7 10l5 5 5-5z"/></svg>
<svg class="a" style="left:1698.8px;top:1032.9px" width="25.5" height="25.5" viewBox="0 0 24 24" fill="#6b3320"><path d="M7 10l5 5 5-5z"/></svg>
<svg class="a" style="left:1078.2px;top:1034.7px" width="22.5" height="22.5" viewBox="0 0 21 21"><rect x="0.500" y="0.500" width="20" height="20" rx="2.500" fill="#6b3320"/><path d="M3.800 10.800l4.500 4.500 9-9.500" fill="none" stroke="#fff" stroke-width="2.300"/></svg>
<svg class="a" style="left:1226.2px;top:1034.7px" width="22.5" height="22.5" viewBox="0 0 21 21"><rect x="0.500" y="0.500" width="20" height="20" rx="2.500" fill="#6b3320"/><path d="M3.800 10.800l4.500 4.500 9-9.500" fill="none" stroke="#fff" stroke-width="2.300"/></svg>
<div class="cell" style="left:208px;top:1061.1px">Go to gym</div>
<div class="cell" style="left:734px;top:1061.1px">Health</div>
<div class="cell" style="left:1309px;width:149px;text-align:right;top:1061.1px">22 Apr 2022</div>
<div class="cell" style="left:1462px;width:130px;text-align:right;top:1061.1px">1</div>
<div class="cell" style="left:1601px;top:1061.1px">Not Started</div>
<svg class="a" style="left:986.2px;top:1061.2px" width="25.5" height="25.5" viewBox="0 0 24 24" fill="#a3683c"><path d="M7 10l5 5 5-5z"/></svg>
<svg class="a" style="left:1698.8px;top:1061.2px" width="25.5" height="25.5" viewBox="0 0 24 24" fill="#a3683c"><path d="M7 10l5 5 5-5z"/></svg>
<svg class="a" style="left:1078.2px;top:1063.0px" width="22.5" height="22.5" viewBox="0 0 21 21"><rect x="1.500" y="1.500" width="18" height="18" rx="2" fill="none" stroke="#9a6a3c" stroke-width="2.300"/></svg>
<svg class="a" style="left:1226.2px;top:1063.0px" width="22.5" height="22.5" viewBox="0 0 21 21"><rect x="0.500" y="0.500" width="20" height="20" rx="2.500" fill="#9a6a3c"/><path d="M3.800 10.800l4.500 4.500 9-9.500" fill="none" stroke="#fff" stroke-width="2.300"/></svg>
<div class="cell" style="left:208px;top:1089.4px">Apply a new job</div>
<div class="cell" style="left:734px;top:1089.4px">Career</div>
<div class="cell" style="left:1309px;width:149px;text-align:right;top:1089.4px">23 Apr 2022</div>
<div class="cell" style="left:1462px;width:130px;text-align:right;top:1089.4px">2</div>
<div class="cell" style="left:1601px;top:1089.4px">In Progress</div>
<svg class="a" style="left:986.2px;top:1089.5px" width="25.5" height="25.5" viewBox="0 0 24 24" fill="#a3683c"><path d="M7 10l5 5 5-5z"/></svg>
<svg class="a" style="left:1698.8px;top:1089.5px" width="25.5" height="25.5" viewBox="0 0 24 24" fill="#a3683c"><path d="M7 10l5 5 5-5z"/></svg>
<svg class="a" style="left:1078.2px;top:1091.3px" width="22.5" height="22.5" viewBox="0 0 21 21"><rect x="0.500" y="0.500" width="20" height="20" rx="2.500" fill="#9a6a3c"/><path d="M3.800 10.800l4.500 4.500 9-9.500" fill="none" stroke="#fff" stroke-width="2.300"/></svg>
<svg class="a" style="left:1226.2px;top:1091.3px" width="22.5" height="22.5" viewBox="0 0 21 21"><rect x="0.500" y="0.500" width="20" height="20" rx="2.500" fill="#9a6a3c"/><path d="M3.800 10.800l4.500 4.500 9-9.500" fill="none" stroke="#fff" stroke-width="2.300"/></svg>
<div class="cell" style="left:208px;top:1117.7px">Write blog post</div>
<div class="cell" style="left:734px;top:1117.7px">Hobby</div>
<div class="cell" style="left:1309px;width:149px;text-align:right;top:1117.7px">24 Apr 2022</div>
<div class="cell" style="left:1462px;width:130px;text-align:right;top:1117.7px">3</div>
<div class="cell" style="left:1601px;top:1117.7px">On Hold</div>
<svg class="a" style="left:986.2px;top:1117.8px" width="25.5" height="25.5" viewBox="0 0 24 24" fill="#a3683c"><path d="M7 10l5 5 5-5z"/></svg>
<svg class="a" style="left:1698.8px;top:1117.8px" width="25.5" height="25.5" viewBox="0 0 24 24" fill="#a3683c"><path d="M7 10l5 5 5-5z"/></svg>
<svg class="a" style="left:1078.2px;top:1119.6px" width="22.5" height="22.5" viewBox="0 0 21 21"><rect x="1.500" y="1.500" width="18" height="18" rx="2" fill="none" stroke="#9a6a3c" stroke-width="2.300"/></svg>
<svg class="a" style="left:1226.2px;top:1119.6px" width="22.5" height="22.5" viewBox="0 0 21 21"><rect x="1.500" y="1.500" width="18" height="18" rx="2" fill="none" stroke="#9a6a3c" stroke-width="2.300"/></svg>
<div class="cell" style="left:208px;top:1146.0px">Clean bathroom</div>
<div class="cell" style="left:734px;top:1146.0px">Home</div>
<div class="cell" style="left:1309px;width:149px;text-align:right;top:1146.0px">26 Apr 2022</div>
<div class="cell" style="left:1462px;width:130px;text-align:right;top:1146.0px">5</div>
<div class="cell" style="left:1601px;top:1146.0px">In Progress</div>
<svg class="a" style="left:986.2px;top:1146.1px" width="25.5" height="25.5" viewBox="0 0 24 24" fill="#a3683c"><path d="M7 10l5 5 5-5z"/></svg>
<svg class="a" style="left:1698.8px;top:1146.1px" width="25.5" height="25.5" viewBox="0 0 24 24" fill="#a3683c"><path d="M7 10l5 5 5-5z"/></svg>
<svg class="a" style="left:1078.2px;top:1147.9px" width="22.5" height="22.5" viewBox="0 0 21 21"><rect x="0.500" y="0.500" width="20" height="20" rx="2.500" fill="#9a6a3c"/><path d="M3.800 10.800l4.500 4.500 9-9.500" fill="none" stroke="#fff" stroke-width="2.300"/></svg>
<svg class="a" style="left:1226.2px;top:1147.9px" width="22.5" height="22.5" viewBox="0 0 21 21"><rect x="1.500" y="1.500" width="18" height="18" rx="2" fill="none" stroke="#9a6a3c" stroke-width="2.300"/></svg>
<div class="cell" style="left:208px;top:1174.3px">Laundry</div>
<div class="cell" style="left:734px;top:1174.3px">Home</div>
<div class="cell" style="left:1309px;width:149px;text-align:right;top:1174.3px">28 Apr 2022</div>
<div class="cell" style="left:1462px;width:130px;text-align:right;top:1174.3px">7</div>
<div class="cell" style="left:1601px;top:1174.3px">Not Started</div>
<svg class="a" style="left:986.2px;top:1174.4px" width="25.5" height="25.5" viewBox="0 0 24 24" fill="#a3683c"><path d="M7 10l5 5 5-5z"/></svg>
<svg class="a" style="left:1698.8px;top:1174.4px" width="25.5" height="25.5" viewBox="0 0 24 24" fill="#a3683c"><path d="M7 10l5 5 5-5z"/></svg>
<svg class="a" style="left:1078.2px;top:1176.2px" width="22.5" height="22.5" viewBox="0 0 21 21"><rect x="0.500" y="0.500" width="20" height="20" rx="2.500" fill="#9a6a3c"/><path d="M3.800 10.800l4.500 4.500 9-9.500" fill="none" stroke="#fff" stroke-width="2.300"/></svg>
<svg class="a" style="left:1226.2px;top:1176.2px" width="22.5" height="22.5" viewBox="0 0 21 21"><rect x="0.500" y="0.500" width="20" height="20" rx="2.500" fill="#9a6a3c"/><path d="M3.800 10.800l4.500 4.500 9-9.500" fill="none" stroke="#fff" stroke-width="2.300"/></svg>
<div class="cell" style="left:208px;top:1202.6px">Plan a solo trip to Italy</div>
<div class="cell" style="left:734px;top:1202.6px">Personal</div>
<div class="cell" style="left:1309px;width:149px;text-align:right;top:1202.6px">30 Apr 2022</div>
<div class="cell" style="left:1462px;width:130px;text-align:right;top:1202.6px">9</div>
<div class="cell" style="left:1601px;top:1202.6px">Not Started</div>
<svg class="a" style="left:986.2px;top:1202.7px" width="25.5" height="25.5" viewBox="0 0 24 24" fill="#a3683c"><path d="M7 10l5 5 5-5z"/></svg>
<svg class="a" style="left:1698.8px;top:1202.7px" width="25.5" height="25.5" viewBox="0 0 24 24" fill="#a3683c"><path d="M7 10l5 5 5-5z"/></svg>
<svg class="a" style="left:1078.2px;top:1204.5px" width="22.5" height="22.5" viewBox="0 0 21 21"><rect x="0.500" y="0.500" width="20" height="20" rx="2.500" fill="#9a6a3c"/><path d="M3.800 10.800l4.500 4.500 9-9.500" fill="none" stroke="#fff" stroke-width="2.300"/></svg>
<svg class="a" style="left:1226.2px;top:1204.5px" width="22.5" height="22.5" viewBox="0 0 21 21"><rect x="1.500" y="1.500" width="18" height="18" rx="2" fill="none" stroke="#9a6a3c" stroke-width="2.300"/></svg>
<div class="cell" style="left:208px;top:1230.9px">Have lunch with Melissa</div>
<div class="cell" style="left:734px;top:1230.9px">Relationship</div>
<div class="cell" style="left:1309px;width:149px;text-align:right;top:1230.9px">1 May 2022</div>
<div class="cell" style="left:1462px;width:130px;text-align:right;top:1230.9px">10</div>
<div class="cell" style="left:1601px;top:1230.9px">Not Started</div>
<svg class="a" style="left:986.2px;top:1231.0px" width="25.5" height="25.5" viewBox="0 0 24 24" fill="#a3683c"><path d="M7 10l5 5 5-5z"/></svg>
<svg class="a" style="left:1698.8px;top:1231.0px" width="25.5" height="25.5" viewBox="0 0 24 24" fill="#a3683c"><path d="M7 10l5 5 5-5z"/></svg>
<svg class="a" style="left:1078.2px;top:1232.8px" width="22.5" height="22.5" viewBox="0 0 21 21"><rect x="1.500" y="1.500" width="18" height="18" rx="2" fill="none" stroke="#9a6a3c" stroke-width="2.300"/></svg>
<svg class="a" style="left:1226.2px;top:1232.8px" width="22.5" height="22.5" viewBox="0 0 21 21"><rect x="0.500" y="0.500" width="20" height="20" rx="2.500" fill="#9a6a3c"/><path d="M3.800 10.800l4.500 4.500 9-9.500" fill="none" stroke="#fff" stroke-width="2.300"/></svg>
<svg class="a" style="left:986.2px;top:1259.3px" width="25.5" height="25.5" viewBox="0 0 24 24" fill="#a3683c"><path d="M7 10l5 5 5-5z"/></svg>
<svg class="a" style="left:1698.8px;top:1259.3px" width="25.5" height="25.5" viewBox="0 0 24 24" fill="#a3683c"><path d="M7 10l5 5 5-5z"/></svg>
<svg class="a" style="left:1078.2px;top:1261.1px" width="22.5" height="22.5" viewBox="0 0 21 21"><rect x="1.500" y="1.500" width="18" height="18" rx="2" fill="none" stroke="#9a6a3c" stroke-width="2.300"/></svg>
<svg class="a" style="left:1226.2px;top:1261.1px" width="22.5" height="22.5" viewBox="0 0 21 21"><rect x="1.500" y="1.500" width="18" height="18" rx="2" fill="none" stroke="#9a6a3c" stroke-width="2.300"/></svg>
<svg class="a" style="left:986.2px;top:1287.7px" width="25.5" height="25.5" viewBox="0 0 24 24" fill="#a3683c"><path d="M7 10l5 5 5-5z"/></svg>
<svg class="a" style="left:1698.8px;top:1287.7px" width="25.5" height="25.5" viewBox="0 0 24 24" fill="#a3683c"><path d="M7 10l5 5 5-5z"/></svg>
<svg class="a" style="left:1078.2px;top:1289.5px" width="22.5" height="22.5" viewBox="0 0 21 21"><rect x="1.500" y="1.500" width="18" height="18" rx="2" fill="none" stroke="#9a6a3c" stroke-width="2.300"/></svg>
<svg class="a" style="left:1226.2px;top:1289.5px" width="22.5" height="22.5" viewBox="0 0 21 21"><rect x="1.500" y="1.500" width="18" height="18" rx="2" fill="none" stroke="#9a6a3c" stroke-width="2.300"/></svg>
<svg class="a" style="left:986.2px;top:1316.0px" width="25.5" height="25.5" viewBox="0 0 24 24" fill="#a3683c"><path d="M7 10l5 5 5-5z"/></svg>
<svg class="a" style="left:1698.8px;top:1316.0px" width="25.5" height="25.5" viewBox="0 0 24 24" fill="#a3683c"><path d="M7 10l5 5 5-5z"/></svg>
<svg class="a" style="left:1078.2px;top:1317.8px" width="22.5" height="22.5" viewBox="0 0 21 21"><rect x="1.500" y="1.500" width="18" height="18" rx="2" fill="none" stroke="#9a6a3c" stroke-width="2.300"/></svg>
<svg class="a" style="left:1226.2px;top:1317.8px" width="22.5" height="22.5" viewBox="0 0 21 21"><rect x="1.500" y="1.500" width="18" height="18" rx="2" fill="none" stroke="#9a6a3c" stroke-width="2.300"/></svg>
<svg class="a" style="left:986.2px;top:1344.3px" width="25.5" height="25.5" viewBox="0 0 24 24" fill="#a3683c"><path d="M7 10l5 5 5-5z"/></svg>
<svg class="a" style="left:1698.8px;top:1344.3px" width="25.5" height="25.5" viewBox="0 0 24 24" fill="#a3683c"><path d="M7 10l5 5 5-5z"/></svg>
<svg class="a" style="left:1078.2px;top:1346.1px" width="22.5" height="22.5" viewBox="0 0 21 21"><rect x="1.500" y="1.500" width="18" height="18" rx="2" fill="none" stroke="#9a6a3c" stroke-width="2.300"/></svg>
<svg class="a" style="left:1226.2px;top:1346.1px" width="22.5" height="22.5" viewBox="0 0 21 21"><rect x="1.500" y="1.500" width="18" height="18" rx="2" fill="none" stroke="#9a6a3c" stroke-width="2.300"/></svg>
<svg class="a" style="left:986.2px;top:1372.6px" width="25.5" height="25.5" viewBox="0 0 24 24" fill="#a3683c"><path d="M7 10l5 5 5-5z"/></svg>
<svg class="a" style="left:1698.8px;top:1372.6px" width="25.5" height="25.5" viewBox="0 0 24 24" fill="#a3683c"><path d="M7 10l5 5 5-5z"/></svg>
<svg class="a" style="left:1078.2px;top:1374.4px" width="22.5" height="22.5" viewBox="0 0 21 21"><rect x="1.500" y="1.500" width="18" height="18" rx="2" fill="none" stroke="#9a6a3c" stroke-width="2.300"/></svg>
<svg class="a" style="left:1226.2px;top:1374.4px" width="22.5" height="22.5" viewBox="0 0 21 21"><rect x="1.500" y="1.500" width="18" height="18" rx="2" fill="none" stroke="#9a6a3c" stroke-width="2.300"/></svg>
<svg class="a" style="left:986.2px;top:1400.9px" width="25.5" height="25.5" viewBox="0 0 24 24" fill="#a3683c"><path d="M7 10l5 5 5-5z"/></svg>
<svg class="a" style="left:1698.8px;top:1400.9px" width="25.5" height="25.5" viewBox="0 0 24 24" fill="#a3683c"><path d="M7 10l5 5 5-5z"/></svg>
<svg class="a" style="left:1078.2px;top:1402.7px" width="22.5" height="22.5" viewBox="0 0 21 21"><rect x="1.500" y="1.500" width="18" height="18" rx="2" fill="none" stroke="#9a6a3c" stroke-width="2.300"/></svg>
<svg class="a" style="left:1226.2px;top:1402.7px" width="22.5" height="22.5" viewBox="0 0 21 21"><rect x="1.500" y="1.500" width="18" height="18" rx="2" fill="none" stroke="#9a6a3c" stroke-width="2.300"/></svg>
<div class="a" style="left:108px;top:1425px;width:1731px;height:15px;background:#fff"></div>
<div class="a" style="left:108px;top:1425px;width:62px;height:15px;background:#f8f9fa"></div>
<div class="a" style="left:172px;top:1427.500px;width:664px;height:10px;background:#dadce0;border-radius:5px"></div>
<div class="a" style="left:1826px;top:1388px;width:13px;height:37px;border:1px solid #dadce0;background:#fff"></div>
<div class="a" style="left:1826px;top:1406px;width:13px;height:1px;background:#dadce0"></div>
<svg class="a" style="left:1829px;top:1394px" width="8" height="5" viewBox="0 0 8 5" fill="#9aa0a6"><path d="M0 5l4-5 4 5z"/></svg>
<svg class="a" style="left:1829px;top:1413px" width="8" height="5" viewBox="0 0 8 5" fill="#9aa0a6"><path d="M0 0l4 5 4-5z"/></svg>
<div class="a" style="left:1786px;top:1425px;width:41px;height:15px;border:1px solid #dadce0;background:#fff"></div>
<div class="a" style="left:1806px;top:1425px;width:1px;height:15px;background:#dadce0"></div>
<svg class="a" style="left:1793px;top:1429px" width="5" height="8" viewBox="0 0 5 8" fill="#9aa0a6"><path d="M5 0L0 4l5 4z"/></svg>
<svg class="a" style="left:1814px;top:1429px" width="5" height="8" viewBox="0 0 5 8" fill="#9aa0a6"><path d="M0 0l5 4-5 4z"/></svg>
<div class="a" style="left:108px;top:1440px;width:1731px;height:48px;background:linear-gradient(#f4f5f6,#e9eaec);border-top:1px solid #e3e4e6;border-radius:0 0 5px 5px"></div>
<div class="a" style="left:527px;top:1440px;width:159px;height:48px;background:linear-gradient(#fff,#f3f4f5);box-shadow:0 0 2px rgba(0,0,0,.15)"></div>
<div class="a" style="left:251px;top:1441px;width:1px;height:46px;background:#e6e7e9"></div>
<div class="a" style="left:405px;top:1441px;width:1px;height:46px;background:#e6e7e9"></div>
<svg class="a" style="left:165.5px;top:1454.0px" width="22" height="22" viewBox="0 0 24 24" fill="#5f6368"><path d="M10.700 5h2.600v5.700H19v2.600h-5.700V19h-2.600v-5.700H5v-2.600h5.700z"/></svg>
<svg class="a" style="left:207px;top:1457px" width="16" height="16" viewBox="0 0 16 16" fill="#5f6368"><path d="M0 .600h16v2.700H0zM0 4.900h16v2.700H0zM0 9.200h16v2.700H0zM0 13.500h16v2.500H0z"/></svg>
<div class="a" style="left:271.7px;top:1454px;font-size:18px;line-height:22px;-webkit-text-stroke:.35px currentColor;letter-spacing:0.69px;color:#5f6368">Instruction</div>
<svg class="a" style="left:369.0px;top:1454.5px" width="23" height="23" viewBox="0 0 24 24" fill="#80868b"><path d="M7 10l5 5 5-5z"/></svg>
<div class="a" style="left:426px;top:1454px;font-size:18px;line-height:22px;-webkit-text-stroke:.35px currentColor;letter-spacing:0.33px;color:#5f6368">Master</div>
<svg class="a" style="left:489.0px;top:1454.5px" width="23" height="23" viewBox="0 0 24 24" fill="#80868b"><path d="M7 10l5 5 5-5z"/></svg>
<div class="a" style="left:546.8px;top:1454px;font-size:18px;line-height:22px;-webkit-text-stroke:.35px currentColor;letter-spacing:0.17px;color:#188038">Brain Dump</div>
<svg class="a" style="left:649.0px;top:1454.5px" width="23" height="23" viewBox="0 0 24 24" fill="#188038"><path d="M7 10l5 5 5-5z"/></svg>
<svg class="a" style="left:1723px;top:1453px" width="24" height="27" viewBox="0 0 24 27"><path d="M3 0h18a3 3 0 0 1 3 3v17a3 3 0 0 1-3 3h-5l-4 4-4-4H3a3 3 0 0 1-3-3V3a3 3 0 0 1 3-3z" fill="#5f6368"/><path d="M12 4l2 5.500 5.500 2-5.500 2-2 5.500-2-5.500-5.500-2 5.500-2z" fill="#fff"/></svg>
<svg class="a" style="left:1793.5px;top:1454.5px" width="24" height="24" viewBox="0 0 24 24" fill="#444746"><path d="M15.41 7.41L14 6l-6 6 6 6 1.410-1.410L10.830 12z"/></svg>
</body></html>
